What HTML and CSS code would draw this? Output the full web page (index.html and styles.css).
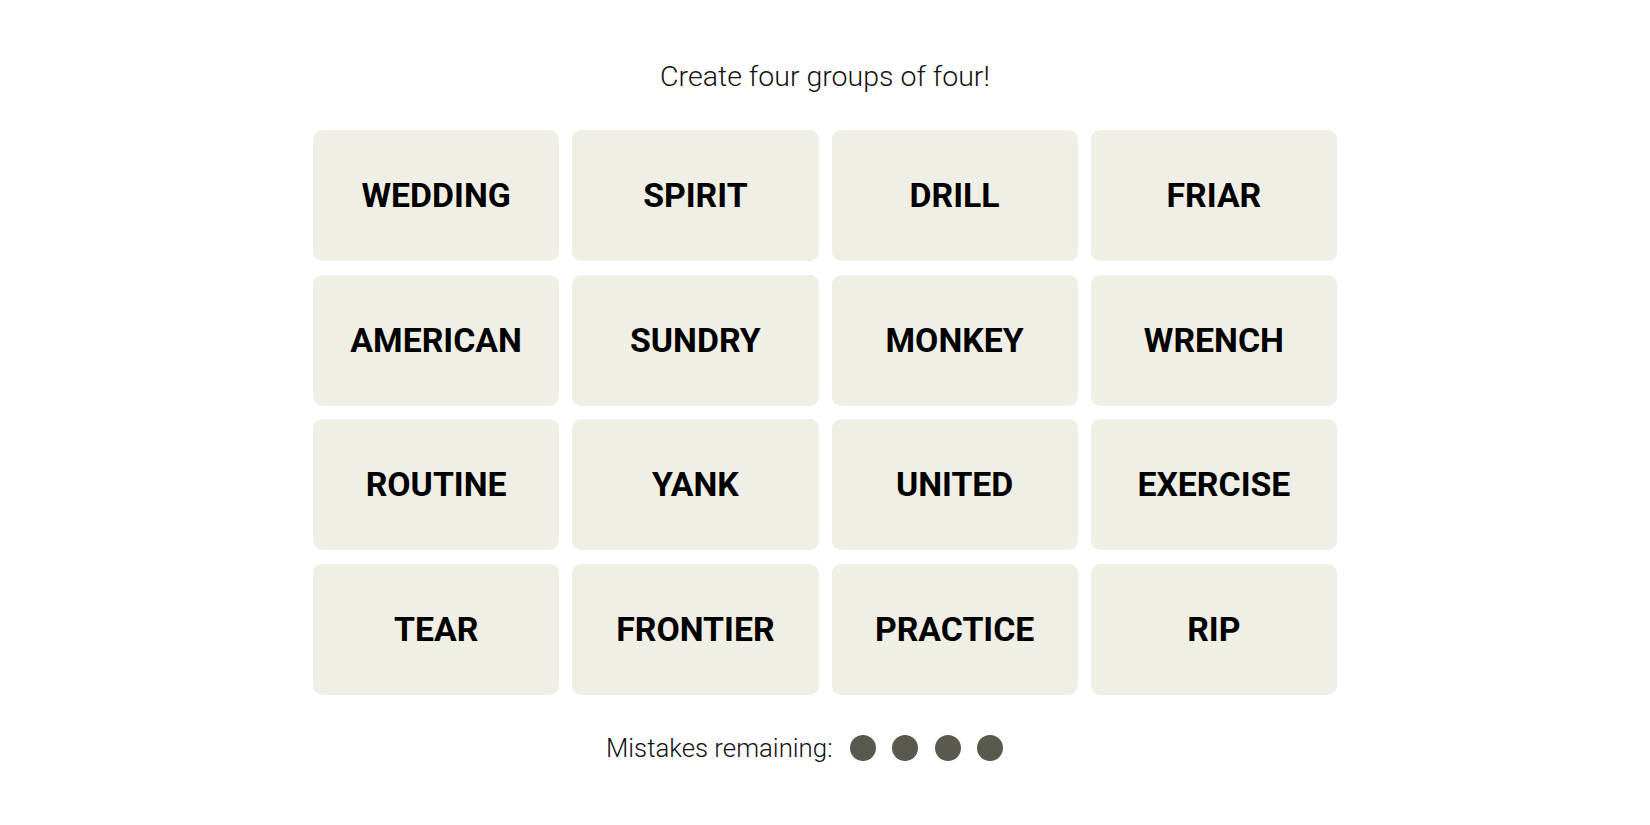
FILE: index.html
```html
<!DOCTYPE html>
<html lang="en">
<head>
<meta charset="utf-8">
<title>Connections</title>
<link rel="stylesheet" href="styles.css">
</head>
<body>
<main class="game">
  <p class="prompt">Create four groups of four!</p>
  <section class="board">
    <div class="tile">WEDDING</div>
    <div class="tile">SPIRIT</div>
    <div class="tile">DRILL</div>
    <div class="tile">FRIAR</div>
    <div class="tile">AMERICAN</div>
    <div class="tile">SUNDRY</div>
    <div class="tile">MONKEY</div>
    <div class="tile">WRENCH</div>
    <div class="tile">ROUTINE</div>
    <div class="tile">YANK</div>
    <div class="tile">UNITED</div>
    <div class="tile">EXERCISE</div>
    <div class="tile">TEAR</div>
    <div class="tile">FRONTIER</div>
    <div class="tile">PRACTICE</div>
    <div class="tile">RIP</div>
  </section>
  <div class="mistakes">
    <span class="mistakes-label">Mistakes remaining:</span>
    <span class="dots">
      <span class="dot"></span>
      <span class="dot"></span>
      <span class="dot"></span>
      <span class="dot"></span>
    </span>
  </div>
</main>
</body>
</html>
```

FILE: styles.css
```css
html, body {
  margin: 0;
  padding: 0;
  background: #ffffff;
}

body {
  font-family: Roboto, "Liberation Sans", sans-serif;
  color: #121212;
}

.game {
  display: flex;
  flex-direction: column;
  align-items: center;
  padding-top: 58px;
}

.prompt {
  margin: 0;
  font-size: 28.5px;
  font-weight: 300;
  line-height: 38px;
  color: #121212;
}

.board {
  margin-top: 34px;
  width: 1024px;
  display: grid;
  grid-template-columns: repeat(4, 1fr);
  grid-auto-rows: 131px;
  column-gap: 13px;
  row-gap: 13.7px;
}

.tile {
  background: #efefe6;
  border-radius: 9px;
  display: flex;
  align-items: center;
  justify-content: center;
  font-size: 33.8px;
  font-weight: 700;
  color: #000000;
}

.mistakes {
  margin-top: 38px;
  display: flex;
  align-items: center;
  margin-right: 41px;
}

.mistakes-label {
  font-size: 25.8px;
  font-weight: 300;
  line-height: 30px;
  color: #121212;
}

.dots {
  display: flex;
  gap: 16.5px;
  margin-left: 17px;
}

.dot {
  width: 26px;
  height: 26px;
  border-radius: 50%;
  background: #5a594e;
}
```
